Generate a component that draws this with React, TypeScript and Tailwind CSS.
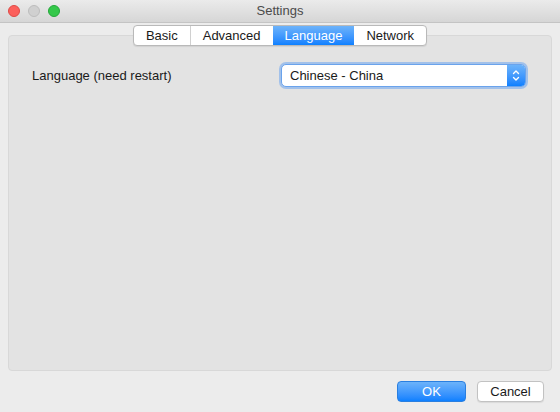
import { useState } from "react";

const tabs = ["Basic", "Advanced", "Language", "Network"];

const TrafficLight = ({ color, border }: { color: string; border: string }) => (
  <span className={`block size-[12px] rounded-full border ${color} ${border}`} />
);

const App = () => {
  const [active, setActive] = useState("Language");

  return (
    <div className="w-[560px] h-[412px] bg-[#ececec] flex flex-col overflow-hidden font-['Liberation_Sans',_Arial,_sans-serif] text-[13px] text-[#1a1a1a]">
      {/* title bar */}
      <div className="h-[23px] shrink-0 flex items-center px-[8px] bg-gradient-to-b from-[#ebebeb] to-[#d6d6d6] border-b border-[#c4c4c4]">
        <div className="flex items-center gap-[8px] w-[60px]">
          <TrafficLight color="bg-[#fc605c]" border="border-[#de4a46]" />
          <TrafficLight color="bg-[#d0d0d0]" border="border-[#bdbdbd]" />
          <TrafficLight color="bg-[#34c84a]" border="border-[#24a73a]" />
        </div>
        <div className="flex-1 text-center text-[#4b4b4b]">Settings</div>
        <div className="w-[60px]" />
      </div>

      {/* body */}
      <div className="flex-1 flex flex-col px-[8px] pt-[2px]">
        <div className="relative z-10 flex justify-center">
          <div className="flex h-[21px] rounded-[4px] border border-[#b9b9b9] bg-white shadow-[0_1px_1px_rgba(0,0,0,0.08)] overflow-hidden">
            {tabs.map((t, i) => {
              const on = t === active;
              return (
                <button
                  key={t}
                  onClick={() => setActive(t)}
                  className={`px-[12px] leading-[19px] ${
                    on
                      ? "bg-gradient-to-b from-[#6cb3fa] to-[#0a80ff] text-white"
                      : "text-[#1a1a1a]"
                  } ${i > 0 && !on && tabs[i - 1] !== active ? "border-l border-[#d0d0d0]" : ""}`}
                >
                  {t}
                </button>
              );
            })}
          </div>
        </div>

        <div className="-mt-[11px] h-[336px] rounded-[4px] border border-[#d8d8d8] bg-[#e3e3e3] pt-[28px] pl-[23px] pr-[25px]">
          <div className="flex items-center justify-between">
            <span className="mt-[1px]">Language (need restart)</span>
            <div className="flex w-[245px] h-[23px] rounded-[5px] bg-white border border-[#6aa3ec] shadow-[0_0_0_2px_rgba(110,165,240,0.55)] overflow-hidden">
              <span className="flex-1 pl-[8px] leading-[21px]">Chinese - China</span>
              <span className="w-[18px] flex items-center justify-center bg-gradient-to-b from-[#6cb3fa] to-[#0a80ff]">
                <svg width="8" height="13" viewBox="0 0 8 13" fill="none" stroke="white" strokeWidth="1.4" strokeLinecap="round" strokeLinejoin="round">
                  <path d="M1.5 4.5 L4 2 L6.5 4.5" />
                  <path d="M1.5 8.5 L4 11 L6.5 8.5" />
                </svg>
              </span>
            </div>
          </div>
        </div>

        <div className="flex justify-end gap-[11px] pt-[10px] pr-[8px]">
          <button className="w-[69px] h-[21px] rounded-[4px] bg-gradient-to-b from-[#6cb3fa] to-[#0a80ff] border border-[#2a7fe0] text-white">
            OK
          </button>
          <button className="w-[67px] h-[21px] rounded-[4px] bg-white border border-[#c2c2c2] shadow-[0_1px_1px_rgba(0,0,0,0.08)]">
            Cancel
          </button>
        </div>
      </div>
    </div>
  );
};

export default App;
